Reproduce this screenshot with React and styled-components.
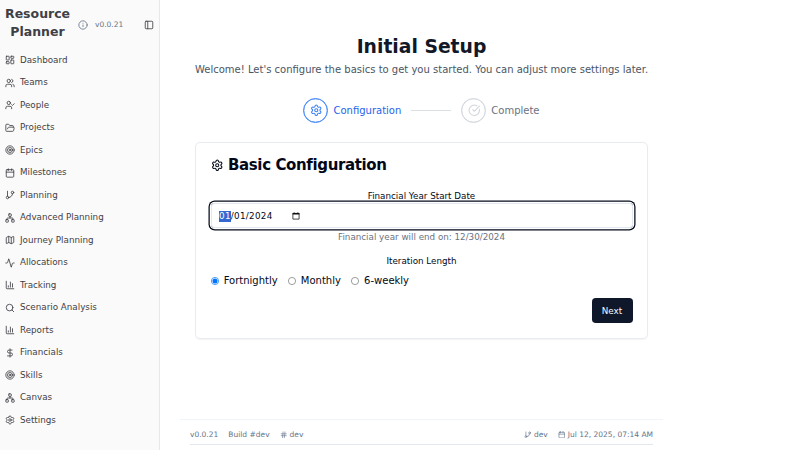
import React from 'react';
import styled, { createGlobalStyle } from 'styled-components';
import {
  LayoutDashboard, Users, UserCheck, FolderOpen, Target, Calendar, GitBranch, Network, Map,
  Activity, ChartColumn, Search, DollarSign, Settings, Info, PanelLeft, CircleCheckBig, Hash,
} from 'lucide-react';

const GlobalStyle = createGlobalStyle`
  * { box-sizing: border-box; }
  body { margin: 0; overflow: hidden; background: #fff; }
  h1, h2, p { margin: 0; }
`;

const Shell = styled.div`
  display: flex;
  width: 800px;
  height: 450px;
  overflow: hidden;
  font-family: "DejaVu Sans", sans-serif;
  font-size: 10px;
  line-height: 15px;
  color: #020817;
  background: #fff;
  white-space: nowrap;
  svg { flex: none; }
`;

const Sidebar = styled.aside`
  flex: none;
  width: 160px;
  background: #fafafa;
  border-right: 1px solid #e5e7eb;
`;

const Brand = styled.header`
  display: flex;
  align-items: center;
  height: 48.75px;
  padding: 1px 5px 0;
  color: #64748b;
`;

const BrandName = styled.h2`
  width: 65px;
  font-size: 12.5px;
  line-height: 17.5px;
  text-align: center;
  white-space: normal;
  color: #3f3f46;
  margin: -4px 7.5px 0 0;
`;

const Version = styled.span`
  font-size: 7.5px;
  margin-left: 7.5px;
  flex: 1;
`;

const NavItem = styled.a`
  display: flex;
  align-items: center;
  gap: 5px;
  height: 22.5px;
  padding-left: 5px;
  font-size: 8.75px;
  color: #3f3f46;
`;

const Main = styled.main`
  flex: none;
  display: flex;
  flex-direction: column;
  width: 483px;
  margin-left: 20px;
`;

const Content = styled.section`
  flex: 1;
  padding: 36px 15px 0;
`;

const Title = styled.h1`
  font-size: 18.75px;
  line-height: 22.5px;
  text-align: center;
  color: #111827;
`;

const Subtitle = styled.p`
  margin-top: 3.5px;
  text-align: center;
  color: #4b5563;
`;

const Stepper = styled.div`
  display: flex;
  align-items: center;
  justify-content: center;
  margin-top: 20.5px;
`;

const Step = styled.div`
  display: flex;
  align-items: center;
  gap: 5px;
  color: ${(p) => (p.$active ? '#2563eb' : '#6b7280')};
`;

const StepCircle = styled.span`
  display: grid;
  place-items: center;
  width: 25px;
  height: 25px;
  border-radius: 50%;
  border: 1.25px solid ${(p) => (p.$active ? '#3b82f6' : '#d1d5db')};
  color: ${(p) => (p.$active ? '#3b82f6' : '#d1d5db')};
  box-shadow: inset 0 0 0 0.25px currentColor;
`;

const StepLine = styled.span`
  width: 40px;
  height: 1px;
  margin: 0 10px;
  background: #dcdfe4;
`;

const Card = styled.section`
  height: 197px;
  margin-top: 19.5px;
  padding: 15px 14.5px 0;
  border: 1px solid #e8ebf0;
  border-radius: 5px;
  box-shadow: 0 0.6px 1.2px rgba(0, 0, 0, 0.05);
`;

const CardTitle = styled.h2`
  display: flex;
  align-items: center;
  gap: 5px;
  font-size: 15px;
  line-height: 15px;
  letter-spacing: -0.375px;
`;

const Label = styled.p`
  margin-top: ${(p) => p.$top}px;
  font-size: 8.75px;
  line-height: 9px;
  text-align: center;
`;

const DateField = styled.div`
  display: flex;
  align-items: center;
  height: 25px;
  margin-top: 2.5px;
  padding: 1px 7.5px 0;
  border: 1px solid #e2e8f0;
  border-radius: 3.75px;
  box-shadow: 0 0 0 1.25px #fff, 0 0 0 2.5px #020817;
  font-size: 8.75px;
  line-height: 11px;
  letter-spacing: 0.32px;
`;

const DateSegment = styled.span`
  background: #3367d1;
  color: #fff;
`;

const DateRest = styled.span`
  margin-right: 19px;
`;

const Hint = styled.p`
  margin-top: 2.5px;
  font-size: 8.75px;
  line-height: 12.5px;
  text-align: center;
  color: #6b7280;
`;

const Choices = styled.div`
  display: flex;
  gap: 10px;
  margin-top: 7.5px;
`;

const Choice = styled.label`
  display: flex;
  align-items: center;
  gap: 5.2px;
`;

const Actions = styled.div`
  display: flex;
  justify-content: flex-end;
  margin-top: 10px;
`;

const PrimaryButton = styled.button`
  width: 41px;
  height: 25px;
  padding: 1px 0 0;
  border: 0;
  border-radius: 3.75px;
  background: #0f172a;
  color: #f8fafc;
  font: 8.75px "DejaVu Sans", sans-serif;
`;

const Footer = styled.footer`
  height: 31px;
  padding: 0 10px;
  border-top: 1px solid #f1f5f9;
`;

const FooterRow = styled.div`
  display: flex;
  align-items: center;
  gap: 10px;
  height: 25px;
  padding-top: 5px;
  border-bottom: 1px solid #e2e8f0;
  font-size: 7.5px;
  line-height: 10px;
  color: #64748b;
`;

const Meta = styled.span`
  display: flex;
  align-items: center;
  gap: 2.5px;
  margin-left: ${(p) => (p.$push ? 'auto' : 0)};
`;

const navigation = [
  ['Dashboard', LayoutDashboard], ['Teams', Users], ['People', UserCheck],
  ['Projects', FolderOpen], ['Epics', Target], ['Milestones', Calendar],
  ['Planning', GitBranch], ['Advanced Planning', Network], ['Journey Planning', Map],
  ['Allocations', Activity], ['Tracking', ChartColumn], ['Scenario Analysis', Search],
  ['Reports', ChartColumn], ['Financials', DollarSign], ['Skills', Target],
  ['Canvas', Network], ['Settings', Settings],
];

function RadioMark({ checked }) {
  return (
    <svg width="8" height="8" viewBox="0 0 8 8">
      <circle cx="4" cy="4" r="3.6" fill="#fff" stroke={checked ? '#0075ff' : '#767676'} strokeWidth="0.7" />
      {checked && <circle cx="4" cy="4" r="2.5" fill="#0075ff" />}
    </svg>
  );
}

function PickerIcon() {
  return (
    <svg width="8" height="8" viewBox="0 0 8 8">
      <path d="M.9 1.4h6.2v5.7H.9zM2.2.3v1M5.8.3v1" fill="none" stroke="#111" strokeWidth="0.75" />
      <path d="M.6 1h6.8v1.5H.6z" fill="#111" />
    </svg>
  );
}

export default function App() {
  return (
    <Shell>
      <GlobalStyle />
      <Sidebar>
        <Brand>
          <BrandName>Resource Planner</BrandName>
          <Info size={10} />
          <Version>v0.0.21</Version>
          <PanelLeft size={10} color="#3f3f46" />
        </Brand>
        <nav>
          {navigation.map(([name, Icon]) => (
            <NavItem key={name}><Icon size={10} />{name}</NavItem>
          ))}
        </nav>
      </Sidebar>
      <Main>
        <Content>
          <Title>Initial Setup</Title>
          <Subtitle>Welcome! Let's configure the basics to get you started. You can adjust more settings later.</Subtitle>
          <Stepper>
            <Step $active>
              <StepCircle $active><Settings size={12.5} /></StepCircle>
              Configuration
            </Step>
            <StepLine />
            <Step>
              <StepCircle><CircleCheckBig size={12.5} /></StepCircle>
              Complete
            </Step>
          </Stepper>
          <Card>
            <CardTitle><Settings size={12.5} />Basic Configuration</CardTitle>
            <Label $top={18.5}>Financial Year Start Date</Label>
            <DateField>
              <DateSegment>01</DateSegment>
              <DateRest>/01/2024</DateRest>
              <PickerIcon />
            </DateField>
            <Hint>Financial year will end on: 12/30/2024</Hint>
            <Label $top={13.5}>Iteration Length</Label>
            <Choices>
              <Choice><RadioMark checked />Fortnightly</Choice>
              <Choice><RadioMark />Monthly</Choice>
              <Choice><RadioMark />6-weekly</Choice>
            </Choices>
            <Actions><PrimaryButton>Next</PrimaryButton></Actions>
          </Card>
        </Content>
        <Footer>
          <FooterRow>
            <Meta>v0.0.21</Meta>
            <Meta>Build #dev</Meta>
            <Meta><Hash size={7.5} />dev</Meta>
            <Meta $push><GitBranch size={7.5} />dev</Meta>
            <Meta><Calendar size={7.5} />Jul 12, 2025, 07:14 AM</Meta>
          </FooterRow>
        </Footer>
      </Main>
    </Shell>
  );
}
